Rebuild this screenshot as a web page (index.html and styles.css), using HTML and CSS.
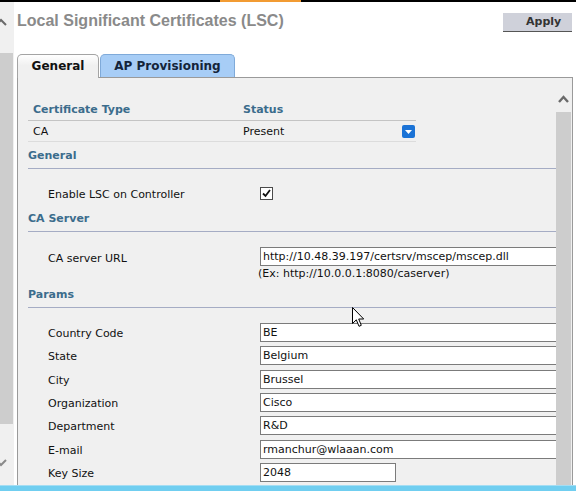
FILE: index.html
```html
<!DOCTYPE html>
<html lang="en">
<head>
<meta charset="utf-8">
<title>Local Significant Certificates (LSC)</title>
<link rel="stylesheet" href="styles.css">
</head>
<body>
<div class="topline"></div>
<div class="frame">
  <div class="sidebar">
    <svg class="sb-up" width="14" height="10" viewBox="0 0 14 10"><polyline points="-4,8 1,3 6,8" fill="none" stroke="#6a6a6a" stroke-width="2"/></svg>
    <div class="sb-thumb"></div>
    <svg class="sb-down" width="14" height="10" viewBox="0 0 14 10"><polyline points="-4,2 1,7 6,2" fill="none" stroke="#8a8a8a" stroke-width="2"/></svg>
  </div>
  <div class="page">
    <div class="header">
      <h1 class="title">Local Significant Certificates (LSC)</h1>
      <button class="apply" type="button">Apply</button>
    </div>
    <div class="tabs">
      <div class="tab active">General</div>
      <div class="tab">AP Provisioning</div>
    </div>
    <div class="panel">
      <div class="panel-body">
        <div class="cert-head">
          <span>Certificate Type</span>
          <span>Status</span>
        </div>
        <div class="cert-row">
          <span>CA</span>
          <span class="status">Present
            <span class="dd"><svg width="13" height="13" viewBox="0 0 13 13"><polygon points="3,5 10,5 6.5,9" fill="#fff"/></svg></span>
          </span>
        </div>

        <div class="section">General</div>
        <div class="field field-check">
          <span class="label">Enable LSC on Controller</span>
          <span class="checkbox"><svg width="11" height="11" viewBox="0 0 11 11"><polyline points="2,5.5 4.5,8 9,2" fill="none" stroke="#111" stroke-width="1.8"/></svg></span>
        </div>

        <div class="section">CA Server</div>
        <div class="field field-url">
          <span class="label">CA server URL</span>
          <span class="input wide">http://10.48.39.197/certsrv/mscep/mscep.dll</span>
        </div>
        <div class="hint">(Ex: http://10.0.0.1:8080/caserver)</div>

        <div class="section">Params</div>
        <div class="params">
          <span class="label">Country Code</span><span class="input wide">BE</span>
          <span class="label">State</span><span class="input wide">Belgium</span>
          <span class="label">City</span><span class="input wide">Brussel</span>
          <span class="label">Organization</span><span class="input wide">Cisco</span>
          <span class="label">Department</span><span class="input wide">R&amp;D</span>
          <span class="label">E-mail</span><span class="input wide">rmanchur@wlaaan.com</span>
          <span class="label">Key Size</span><span class="input short">2048</span>
        </div>
      </div>
      <div class="vscroll">
        <svg class="vs-up" width="16" height="10" viewBox="0 0 16 10"><polyline points="3,8 7.5,3 12,8" fill="none" stroke="#6a6a6a" stroke-width="2.4"/></svg>
        <div class="vs-thumb"></div>
      </div>
      <svg class="cursor" width="13" height="21" viewBox="0 0 13 21"><path d="M0.5,0.5 L0.5,16.5 L4.3,12.8 L7,19.3 L9.3,18.3 L6.7,12 L11.7,12 Z" fill="#fff" stroke="#000" stroke-width="1"/></svg>
    </div>
  </div>
</div>
<div class="bottombar"></div>
</body>
</html>
```

FILE: styles.css
```css
* { box-sizing: border-box; }

html, body { margin: 0; padding: 0; }

body {
  width: 576px;
  height: 491px;
  overflow: hidden;
  background: #ffffff;
  font-family: "DejaVu Sans", sans-serif;
  font-size: 11px;
  color: #111;
  display: flex;
  flex-direction: column;
}

.topline {
  flex: none;
  height: 2px;
  background: linear-gradient(to right, #000 0 220px, #f29b33 220px 301px, #000 301px);
}

.frame {
  flex: 1;
  display: flex;
  min-height: 0;
}

.bottombar {
  flex: none;
  height: 6px;
  background: #70cef0;
  border-top: 1px solid #a4ddf3;
}

/* left frame scrollbar (partially visible) */
.sidebar {
  flex: none;
  width: 14px;
  background: #f0f0f0;
  display: flex;
  flex-direction: column;
}
.sb-up { margin-top: 15px; flex: none; }
.sb-thumb {
  flex: none;
  margin-top: 26px;
  height: 371px;
  width: 13px;
  background: #cdcdcd;
}
.sb-down { margin-top: 34px; flex: none; }

.page {
  flex: 1;
  min-width: 0;
  padding-left: 3px;
  display: flex;
  flex-direction: column;
}

.header {
  flex: none;
  display: flex;
  justify-content: space-between;
  align-items: flex-start;
}

.title {
  margin: 10px 0 0;
  font: bold 16px/18px "Liberation Sans", Arial, sans-serif;
  color: #8a8a8a;
}

.apply {
  margin: 11px 4px 0 0;
  width: 69px;
  height: 19px;
  padding: 0 0 0 23px;
  text-align: left;
  border: none;
  border-bottom: 1px solid #555;
  background: #cfd1da;
  font: bold 11px/18px "DejaVu Sans", sans-serif;
  color: #333;
}

.tabs {
  flex: none;
  margin-top: 22px;
  display: flex;
  align-items: flex-end;
  height: 23px;
}

.tab {
  height: 23px;
  padding: 0;
  border: 1px solid #7faad9;
  border-bottom: none;
  border-radius: 5px 5px 0 0;
  background: #a7cdf6;
  color: #14243a;
  font: bold 12px/22px "DejaVu Sans", sans-serif;
  white-space: nowrap;
  margin-left: 1px;
  width: 135px;
  text-align: center;
}

.tab.active {
  margin-left: 0;
  width: 82px;
  height: 24px;
  margin-bottom: -1px;
  position: relative;
  z-index: 1;
  border-color: #a4a4a4;
  background: linear-gradient(#ffffff, #f0f0f0 45%);
  color: #111;
}

.panel {
  flex: 1;
  min-height: 0;
  position: relative;
  overflow: hidden;
  margin-right: 3px;
  border: 1px solid #9a9a9a;
  border-bottom: none;
  background: #f0f0f0;
}

.panel-body {
  padding: 21px 16px 0 10px;
}

.cert-head,
.cert-row {
  width: 388px;
  display: grid;
  grid-template-columns: 210px 1fr;
  align-items: center;
  padding-left: 5px;
}

.cert-head {
  height: 22px;
  border-bottom: 1px solid #c4c4c4;
  font-weight: bold;
  color: #3b6c8c;
}

.cert-row {
  height: 21px;
  border-bottom: 1px solid #dcdcdc;
}

.status {
  display: flex;
  justify-content: space-between;
  align-items: center;
  padding-right: 1px;
}

.dd {
  width: 13px;
  height: 13px;
  border-radius: 2px;
  background: #1b73d6;
  display: flex;
}

.section {
  padding: 6px 0 4px;
  line-height: 16px;
  border-bottom: 1px solid #a5acc4;
  font-weight: bold;
  color: #3b6c8c;
}

.field {
  display: grid;
  grid-template-columns: 212px 1fr;
  align-items: center;
  padding-left: 20px;
}

.label {
  padding-top: 2px;
}

.field-url .label {
  padding-top: 3px;
}

.field-check {
  margin-top: 13px;
  height: 23px;
}

.checkbox {
  width: 13px;
  height: 13px;
  border: 1px solid #4a4a4a;
  background: #fff;
  display: flex;
  align-items: center;
  justify-content: center;
}

.field-url {
  margin-top: 15px;
}

.input {
  display: block;
  height: 19px;
  border: 1px solid #7b7b7b;
  background: #fff;
  padding: 0 2px;
  line-height: 17px;
  color: #111;
  white-space: nowrap;
  overflow: hidden;
}

.input.wide { width: 302px; }
.input.short { width: 136px; }

.hint {
  margin: 1px 0 0 230px;
  line-height: 14px;
}

.params {
  margin-top: 15px;
  padding-left: 20px;
  display: grid;
  grid-template-columns: 212px 1fr;
  grid-auto-rows: 19px;
  row-gap: 4.33px;
  align-items: center;
}

.vscroll {
  position: absolute;
  top: 0;
  right: 0;
  bottom: 0;
  width: 16px;
  background: #f0f0f0;
}

.vs-up {
  display: block;
  margin-top: 16px;
}

.vs-thumb {
  margin-top: 8px;
  width: 15px;
  height: 400px;
  background: #cdcdcd;
}

.cursor {
  position: absolute;
  left: 334px;
  top: 229px;
}
```
